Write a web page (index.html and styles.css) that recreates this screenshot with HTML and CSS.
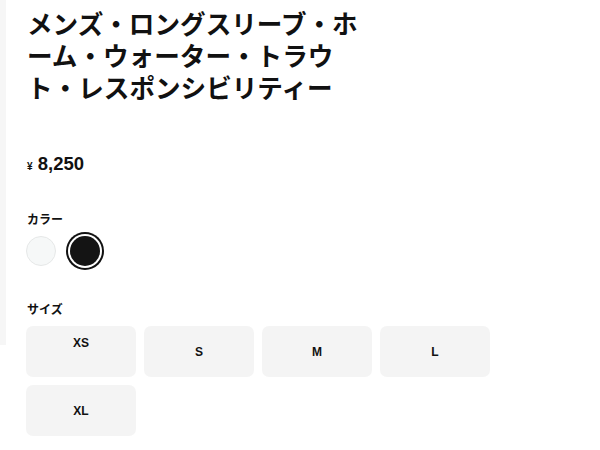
FILE: index.html
```html
<!DOCTYPE html>
<html lang="ja">
<head>
<meta charset="utf-8">
<link rel="stylesheet" href="styles.css">
</head>
<body>
<div class="page">
  <div class="rail"></div>
  <main class="content">
    <h1 class="title">メンズ・ロングスリーブ・ホーム・ウォーター・トラウト・レスポンシビリティー</h1>
    <div class="price"><span class="yen">¥</span> 8,250</div>
    <div class="label label-color">カラー</div>
    <div class="swatches">
      <span class="swatch swatch-white"></span>
      <span class="swatch swatch-black is-selected"></span>
    </div>
    <div class="label label-size">サイズ</div>
    <div class="sizes">
      <button class="size size-top">XS</button>
      <button class="size">S</button>
      <button class="size">M</button>
      <button class="size">L</button>
      <button class="size">XL</button>
    </div>
  </main>
</div>
</body>
</html>
```
FILE: styles.css
```css
html, body {
  margin: 0;
  padding: 0;
  background: #fff;
}
body {
  font-family: "Noto Sans CJK JP", "Noto Sans", sans-serif;
  color: #111;
}
.page {
  display: flex;
  align-items: flex-start;
}
.rail {
  width: 6px;
  height: 345px;
  background: #f6f6f6;
  flex: none;
}
.content {
  padding-left: 20px;
  padding-top: 7px;
}
.title {
  margin: 0 0 0 1px;
  width: 345px;
  font-size: 25.6px;
  line-height: 32px;
  font-weight: 700;
  color: #111;
}
.price {
  margin-top: 51px;
  padding-left: 1px;
  font-family: "Liberation Sans", Arial, sans-serif;
  font-weight: 700;
  font-size: 18.5px;
  line-height: 20px;
  color: #111;
}
.yen {
  font-size: 10px;
}
.label {
  font-size: 12px;
  font-weight: 700;
  line-height: 14px;
  padding-left: 1px;
}
.label-color {
  margin-top: 35px;
}
.swatches {
  display: flex;
  gap: 14px;
  margin-top: 10px;
  align-items: center;
}
.swatch {
  width: 30px;
  height: 30px;
  border-radius: 50%;
  display: block;
  box-sizing: border-box;
}
.swatch-white {
  background: #f6f8f8;
  border: 1px solid #e6e8e8;
}
.swatch-black {
  background: #141414;
  box-shadow: 0 0 0 2px #fff, 0 0 0 4px #111;
}
.label-size {
  margin-top: 36px;
}
.sizes {
  margin-top: 10px;
  display: grid;
  grid-template-columns: repeat(4, 110px);
  gap: 8px 8px;
}
.size {
  height: 51px;
  border: none;
  border-radius: 7px;
  background: #f4f4f4;
  font-family: "Liberation Sans", Arial, sans-serif;
  font-weight: 700;
  font-size: 12px;
  color: #111;
  padding: 0;
  display: flex;
  align-items: center;
  justify-content: center;
}
.size-top {
  align-items: flex-start;
  padding-top: 10px;
}
```
